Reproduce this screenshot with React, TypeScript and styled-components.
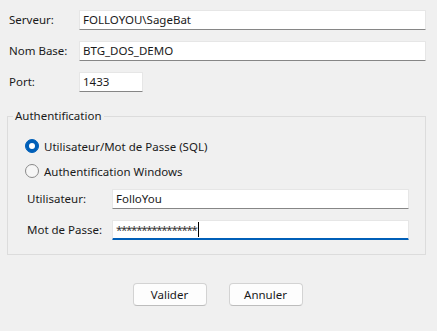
import styled, { createGlobalStyle } from 'styled-components'

const GlobalStyle = createGlobalStyle`
  html, body {
    margin: 0;
    padding: 0;
    background: #f0f0f0;
  }
  body {
    font-family: 'Noto Sans', 'Open Sans', 'Liberation Sans', sans-serif;
    font-size: 11.5px;
    color: #1a1a1a;
  }
`

const Dialog = styled.div`
  width: 437px;
  height: 331px;
  box-sizing: border-box;
  padding: 10px 11px 0 7px;
  display: flex;
  flex-direction: column;
`

const FormGrid = styled.div`
  display: grid;
  grid-template-columns: 70px 1fr;
  row-gap: 11px;
  align-items: center;
  padding-left: 2px;
`

const Label = styled.span`
  line-height: 20px;
  white-space: nowrap;
`

const Field = styled.div<{ $width?: number; $focused?: boolean }>`
  box-sizing: border-box;
  width: ${p => (p.$width ? `${p.$width}px` : '100%')};
  height: 20px;
  background: #fff;
  border: 1px solid #e6e6e6;
  border-bottom: ${p => (p.$focused ? '2px solid #005fb8' : '1px solid #868686')};
  border-radius: 1px;
  padding: 0 3px;
  display: flex;
  align-items: center;
  line-height: 18px;
  white-space: nowrap;
  overflow: hidden;
`

const Masked = styled.span`
  letter-spacing: -1.3px;
  color: #333;
`

const Caret = styled.span`
  display: inline-block;
  width: 1px;
  height: 15px;
  background: #000;
  margin-left: 1px;
`

const Group = styled.fieldset`
  margin: 16px 0 0 0;
  padding: 13px 16px 14px 17px;
  border: 1px solid #dcdcdc;
  border-radius: 0;
  min-width: 0;
`

const Legend = styled.legend`
  padding: 0 2px;
  margin-left: -12px;
  line-height: 16px;
`

const RadioRow = styled.label`
  display: flex;
  align-items: center;
  gap: 5px;
  height: 18px;
  margin-bottom: 7px;
`

const RadioDot = styled.span<{ $checked?: boolean }>`
  box-sizing: border-box;
  width: 14px;
  height: 14px;
  border-radius: 50%;
  display: flex;
  align-items: center;
  justify-content: center;
  background: ${p => (p.$checked ? '#005fb8' : '#f6f6f6')};
  border: 1px solid ${p => (p.$checked ? '#005fb8' : '#8a8a8a')};

  &::after {
    content: '';
    width: 6px;
    height: 6px;
    border-radius: 50%;
    background: #fff;
    display: ${p => (p.$checked ? 'block' : 'none')};
  }
`

const CredGrid = styled.div`
  display: grid;
  grid-template-columns: 85px 1fr;
  row-gap: 11px;
  align-items: center;
  margin-top: 9px;
  padding-left: 2px;
`

const ButtonBar = styled.div`
  display: flex;
  justify-content: center;
  gap: 22px;
  margin-top: 28px;
  padding-left: 2px;
`

const Button = styled.button`
  box-sizing: border-box;
  width: 74px;
  height: 23px;
  background: #fdfdfd;
  border: 1px solid #d3d3d3;
  border-bottom-color: #bdbdbd;
  border-radius: 4px;
  font-family: inherit;
  font-size: 11.5px;
  color: #1a1a1a;
  padding: 0;
`

const App = () => {
  return (
    <>
      <GlobalStyle />
      <Dialog>
        <FormGrid>
          <Label>Serveur:</Label>
          <Field>FOLLOYOU\SageBat</Field>
          <Label>Nom Base:</Label>
          <Field>BTG_DOS_DEMO</Field>
          <Label>Port:</Label>
          <Field $width={64}>1433</Field>
        </FormGrid>

        <Group>
          <Legend>Authentification</Legend>
          <RadioRow>
            <RadioDot $checked />
            Utilisateur/Mot de Passe (SQL)
          </RadioRow>
          <RadioRow>
            <RadioDot />
            Authentification Windows
          </RadioRow>
          <CredGrid>
            <Label>Utilisateur:</Label>
            <Field>FolloYou</Field>
            <Label>Mot de Passe:</Label>
            <Field $focused>
              <Masked>****************</Masked>
              <Caret />
            </Field>
          </CredGrid>
        </Group>

        <ButtonBar>
          <Button>Valider</Button>
          <Button>Annuler</Button>
        </ButtonBar>
      </Dialog>
    </>
  )
}

export default App
